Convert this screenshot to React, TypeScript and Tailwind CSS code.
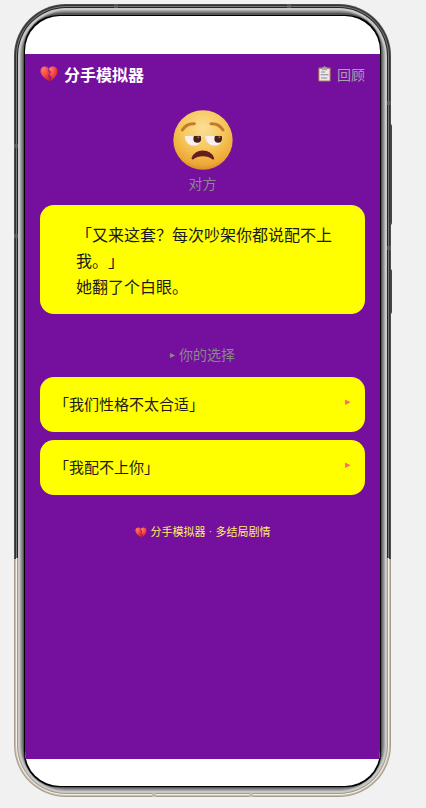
import { ReactNode } from 'react'

const choices = ['「我们性格不太合适」', '「我配不上你」']

function BrokenHeart({ className }: { className?: string }) {
    return (
        <svg viewBox="0 0 36 32" className={className} aria-hidden="true">
            <defs>
                <radialGradient id="heart" cx="0.3" cy="0.2" r="0.9">
                    <stop offset="0" stopColor="#ff7a63" />
                    <stop offset="0.5" stopColor="#f4453f" />
                    <stop offset="1" stopColor="#c51f2c" />
                </radialGradient>
            </defs>
            <path d="M17 4C13-1 1-1 1 10c0 9 10 16 18 21l2-8-5-4 4-6-4-4z" fill="url(#heart)" />
            <path d="M18 4c4-5 17-5 17 6 0 9-7 15-14 20l2-8-5-4 4-6-5-4z" fill="url(#heart)" />
        </svg>
    )
}

function Clipboard({ className }: { className?: string }) {
    return (
        <svg viewBox="0 0 38 46" className={className} aria-hidden="true">
            <rect x="1" y="4" width="36" height="41" rx="2" fill="#a77b5c" />
            <rect x="4" y="8" width="30" height="34" fill="#ece9e8" />
            <path d="M11 4h5c0-5 6-5 6 0h5v8H11z" fill="#aaa5ad" />
            <path d="M9 17h12M8 25h23M9 35h18" stroke="#8c8791" strokeWidth="3" />
        </svg>
    )
}

function UnamusedFace({ className }: { className?: string }) {
    return (
        <svg viewBox="0 0 180 180" className={className} role="img" aria-label="对方">
            <defs>
                <radialGradient id="face" cx="0.5" cy="0.3" r="0.72">
                    <stop offset="0" stopColor="#fbdf98" />
                    <stop offset="0.5" stopColor="#f6c75c" />
                    <stop offset="0.85" stopColor="#eda934" />
                    <stop offset="1" stopColor="#dc8630" />
                </radialGradient>
                <clipPath id="eyes">
                    <path d="M35 77h51c0 19-8 30-23 30S35 95 35 77zM97 77h51c0 19-8 30-23 30S97 95 97 77z" />
                </clipPath>
            </defs>
            <circle cx="90" cy="90" r="89" fill="url(#face)" />
            <path d="M28 60c8-14 20-20 36-19M114 41c16-1 28 5 36 19" fill="none" stroke="#c47a2c" strokeWidth="9" strokeLinecap="round" />
            <g clipPath="url(#eyes)">
                <rect x="30" y="70" width="124" height="40" fill="#f8f0f0" />
                <circle cx="73" cy="86" r="12" fill="#492016" />
                <circle cx="136" cy="86" r="12" fill="#492016" />
                <circle cx="76" cy="82" r="3" fill="#a56b53" />
                <circle cx="139" cy="82" r="3" fill="#a56b53" />
            </g>
            <path d="M59 145c10-27 51-27 61 0-15-13-46-13-61 0z" fill="#681d20" stroke="#681d20" strokeWidth="7" strokeLinejoin="round" />
        </svg>
    )
}

// Metal bezel, built up from thin rings: dark upper part, champagne lower part
function PhoneFrame({ children }: { children: ReactNode }) {
    return (
        <div className="relative rounded-[52px] bg-linear-to-b from-[#4c4c4c] from-70% to-[#a69d90] to-70% p-px">
            <div className="rounded-[51px] bg-linear-to-b from-[#303233] from-70% to-[#c8bfb0] to-70% p-px">
                <div className="rounded-[50px] bg-linear-to-b from-[#777777] from-70% to-[#f8f0e4] to-70% p-px">
                    <div className="rounded-[49px] bg-linear-to-b from-[#252525] from-70% to-[#a39a8c] to-70% p-px">
                        <div className="rounded-[48px] bg-[#c9c9c9] p-0.5">
                            <div className="rounded-[46px] bg-[#aaaaaa] p-px">
                                <div className="rounded-[44px] bg-[#8c8f8f] p-px">
                                    <div className="rounded-[42px] bg-[#777777] p-px">
                                        <div className="rounded-[38px] bg-[#555555] px-px pt-0.5 pb-px">
                                            <div className="rounded-[34px] bg-black p-px">{children}</div>
                                        </div>
                                    </div>
                                </div>
                            </div>
                        </div>
                    </div>
                </div>
            </div>
            {/* side keys */}
            <div className="absolute inset-y-0 -right-px flex w-0.5 flex-col gap-11 pt-[120px]">
                <span className="h-[101px] rounded-r bg-[#444444]" />
                <span className="h-[45px] rounded-r bg-[#444444]" />
            </div>
            {/* antenna lines */}
            <div className="absolute inset-y-0 left-0 flex w-1 flex-col gap-[86px] pt-[140px]">
                <span className="h-1 bg-[#666666]/70" />
                <span className="h-1 bg-[#666666]/70" />
            </div>
            <div className="absolute inset-y-0 right-0 flex w-1 flex-col gap-[141px] pt-[97px]">
                <span className="h-1 bg-[#666666]/70" />
                <span className="h-1 bg-[#666666]/70" />
            </div>
            <div className="absolute inset-x-0 top-0 flex h-1 justify-between px-[100px]">
                <span className="w-1 bg-[#666666]/70" />
                <span className="w-1 bg-[#666666]/70" />
            </div>
            <div className="absolute inset-x-0 bottom-0 flex h-1 justify-between px-[138px]">
                <span className="w-1 bg-[#c4bbad]" />
                <span className="w-1 bg-[#c4bbad]" />
            </div>
        </div>
    )
}

export default function App() {
    return (
        <div className="min-h-screen bg-[#f1f1f1] pt-1 pr-[35px] pb-3 pl-3.5 font-['Noto_Sans_CJK_SC',sans-serif] [text-spacing-trim:space-all]">
            <PhoneFrame>
                <div className="overflow-hidden rounded-[35px] bg-white pt-[38px] pb-[27px]">
                    <main className="min-h-[705px] bg-[#74109d] px-[15px] pt-1.5">
                        <header className="flex h-7 items-center justify-between">
                            <h1 className="flex items-center gap-1.5 text-base font-bold text-white">
                                <BrokenHeart className="h-4 w-[18px]" />
                                分手模拟器
                            </h1>
                            <button type="button" className="flex items-center gap-1.5 text-sm text-[#aaa0b0]">
                                <Clipboard className="h-4 w-[13px]" />
                                回顾
                            </button>
                        </header>

                        <div className="mt-[22px] flex flex-col items-center">
                            <UnamusedFace className="size-[60px]" />
                            <p className="mt-[3px] text-sm text-[#888888]">对方</p>
                        </div>

                        <section className="mt-3 rounded-[14px] bg-[#ffff00] pt-4 pr-5 pb-[15px] pl-9 text-base leading-[26px] text-[#1a1a1a]">
                            <p>「又来这套？每次吵架你都说配不上我。」</p>
                            <p>她翻了个白眼。</p>
                        </section>

                        <h2 className="mt-[30px] flex items-center justify-center gap-1 text-sm text-[#888888]">
                            <span className="text-[10px]">▸</span>
                            你的选择
                        </h2>

                        <div className="mt-[13px] flex flex-col gap-2">
                            {choices.map((choice) => (
                                <button
                                    key={choice}
                                    type="button"
                                    className="flex h-[55px] items-center justify-between rounded-[14px] bg-[#ffff00] px-3.5 text-left text-[15px] text-[#1a1a1a]"
                                >
                                    <span>{choice}</span>
                                    <span className="pb-2 text-[11px] text-[#ff6b6b]">▸</span>
                                </button>
                            ))}
                        </div>

                        <footer className="mt-7 flex items-center justify-center gap-1 text-[11px] text-[#ffee66]">
                            <BrokenHeart className="h-[11px] w-3" />
                            <span>
                                分手模拟器 <span className="px-px font-['Roboto',sans-serif]">·</span> 多结局剧情
                            </span>
                        </footer>
                    </main>
                </div>
            </PhoneFrame>
        </div>
    )
}
